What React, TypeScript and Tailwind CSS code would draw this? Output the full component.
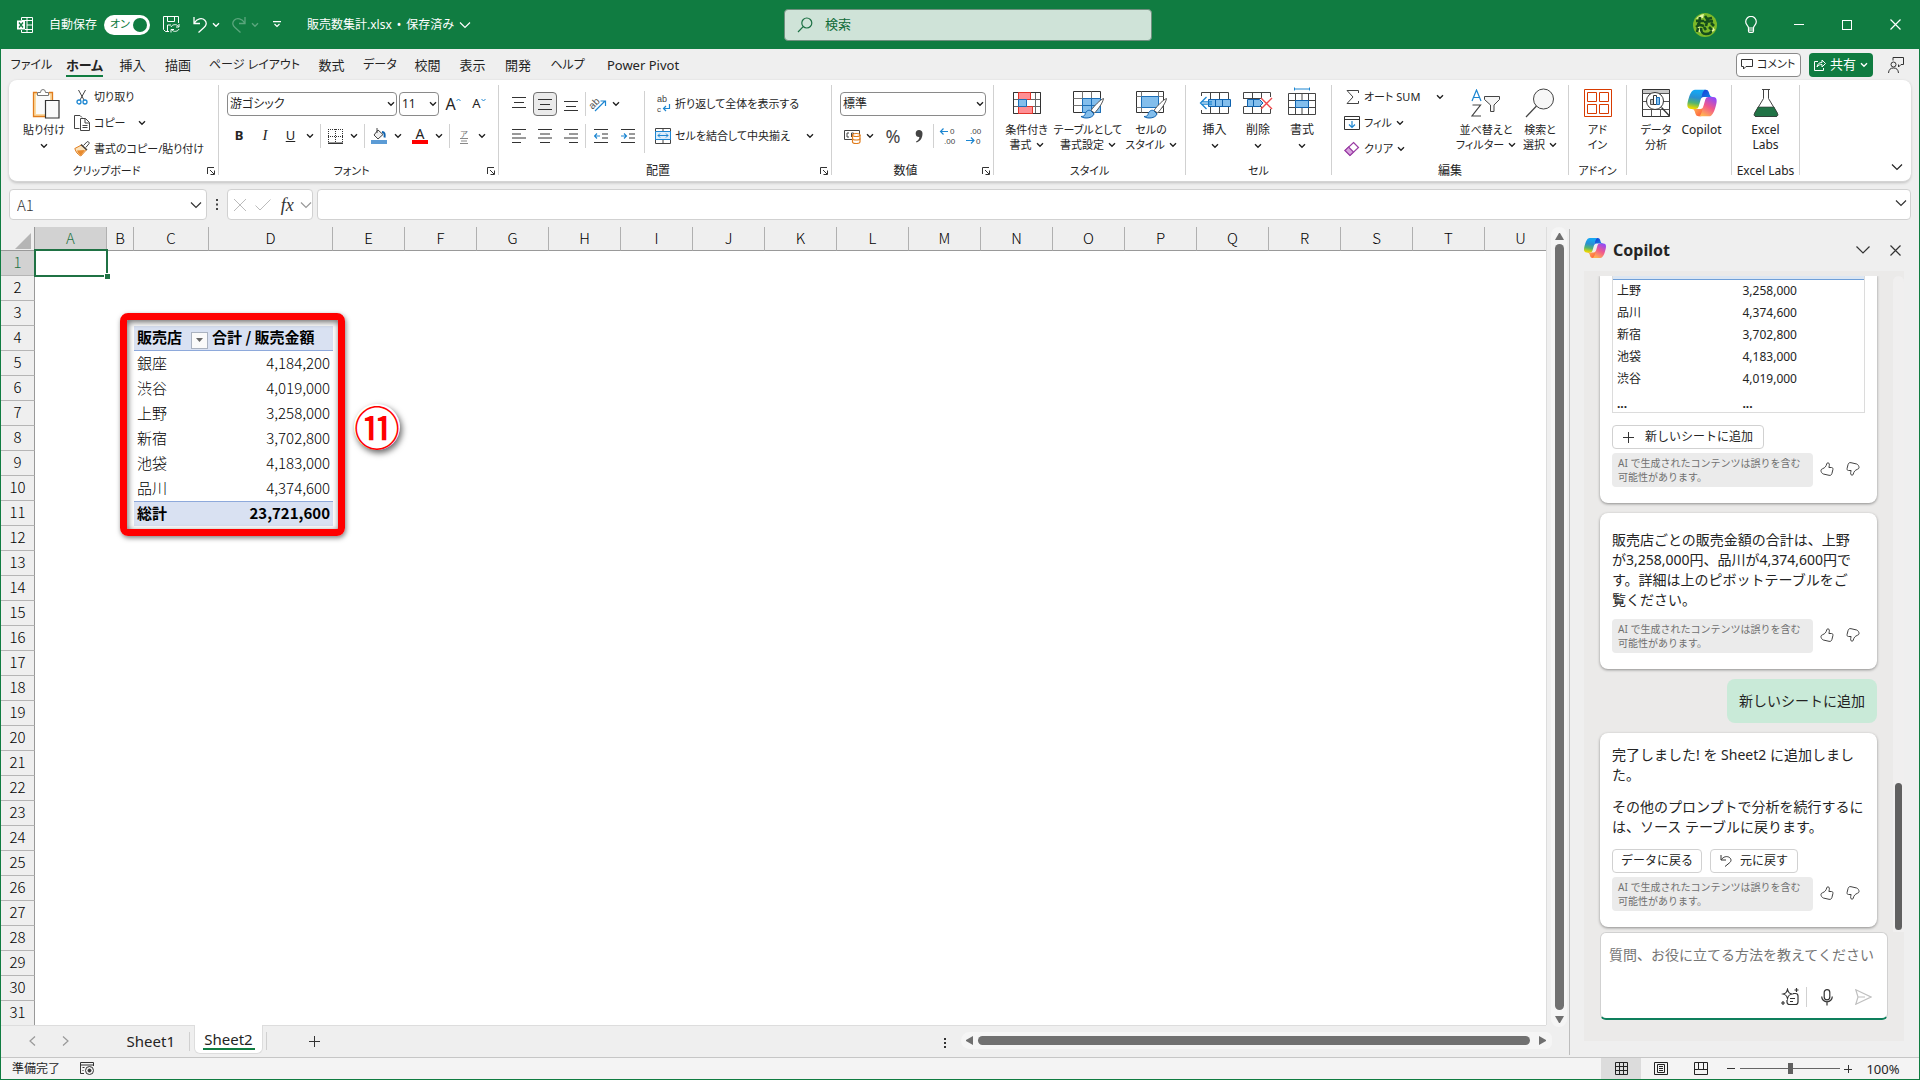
import React from "react";

type Kids = { children?: React.ReactNode };

/* ---------- small shared pieces ---------- */

function Chev({ className = "" }: { className?: string }) {
  return (
    <svg width="8" height="6" viewBox="0 0 8 6" fill="none" stroke="currentColor" strokeWidth="1.4" className={"shrink-0 " + className}>
      <path d="M1 1.2l3 3 3-3" />
    </svg>
  );
}

function BigChev({ className = "" }: { className?: string }) {
  return (
    <svg width="12" height="8" viewBox="0 0 12 8" fill="none" stroke="currentColor" strokeWidth="1.2" className={"shrink-0 " + className}>
      <path d="M1 1.5l5 5 5-5" />
    </svg>
  );
}

function Cell({ w, label, children }: Kids & { w: string; label?: string }) {
  return (
    <button type="button" aria-label={label} className={"flex h-6 shrink-0 items-center justify-center " + w}>
      {children}
    </button>
  );
}

function Bar({ w = "w-px" }: { w?: string }) {
  return (
    <span className={"flex h-6 shrink-0 justify-center " + w}>
      <span className="h-6 w-px bg-[#d1d1d1]" />
    </span>
  );
}

function Divider() {
  return <span className="mt-[5px] h-[90px] w-px shrink-0 bg-[#d1d1d1]" />;
}

function Launcher() {
  return (
    <button type="button" aria-label="詳細設定" className="w-[14px] shrink-0 pl-[3px]">
      <svg width="8" height="8" viewBox="0 0 8 8" fill="none" stroke="#333">
        <path d="M.5 7V.5H7M3 3l4 4M7.5 3.5v4h-4" />
      </svg>
    </button>
  );
}

function Group({ w, label, launcher, kana, children }: Kids & { w: string; label: string; launcher?: boolean; kana?: boolean }) {
  return (
    <section aria-label={label || "Copilot"} className={"flex shrink-0 flex-col pt-1 " + w}>
      <div className="flex h-[78px]">{children}</div>
      <div className="flex h-[18px] items-center">
        <span className={"flex-1 whitespace-nowrap text-center " + (kana ? "text-[11px]" : "text-xs")}>{label}</span>
        {launcher && <Launcher />}
      </div>
    </section>
  );
}

function Big({ w, icon, lines, chev, kana }: { w: string; icon: React.ReactNode; lines: string[]; chev?: "inline" | "below"; kana?: boolean }) {
  return (
    <button type="button" className={"flex shrink-0 flex-col items-center pt-1 " + w}>
      <span className="flex h-[30px] items-center justify-center">{icon}</span>
      <span className={"mt-1 flex flex-col items-center " + (kana ? "text-[11px]" : "text-xs")}>
        {lines.map((l, i) => (
          <span key={l} className="flex items-center gap-1 whitespace-nowrap leading-[15px]">
            {l}
            {chev === "inline" && i === lines.length - 1 && <Chev />}
          </span>
        ))}
      </span>
      {chev === "below" && <Chev className="mt-[6px]" />}
    </button>
  );
}

/* ---------- icons ---------- */

function CopilotLogo({ size, id }: { size: number; id: string }) {
  return (
    <svg width={size} height={size} viewBox="0 0 48 48" fill="none">
      <defs>
        <linearGradient id={id + "a"} x1="38" y1="18" x2="27" y2="5" gradientUnits="userSpaceOnUse">
          <stop stopColor="#0f8fe8" />
          <stop offset="1" stopColor="#1a44d8" />
        </linearGradient>
        <linearGradient id={id + "b"} x1="10" y1="32" x2="22" y2="44" gradientUnits="userSpaceOnUse">
          <stop stopColor="#ffb657" />
          <stop offset="1" stopColor="#ff5f3d" />
        </linearGradient>
        <linearGradient id={id + "c"} x1="14" y1="4" x2="9" y2="33" gradientUnits="userSpaceOnUse">
          <stop offset="0.1" stopColor="#16a5f0" />
          <stop offset="0.4" stopColor="#2a8fd0" />
          <stop offset="0.68" stopColor="#52b471" />
          <stop offset="0.95" stopColor="#e8d800" />
        </linearGradient>
        <linearGradient id={id + "d"} x1="42" y1="13" x2="24" y2="46" gradientUnits="userSpaceOnUse">
          <stop offset="0.06" stopColor="#8c48ff" />
          <stop offset="0.5" stopColor="#f2598a" />
          <stop offset="0.9" stopColor="#ffb152" />
        </linearGradient>
      </defs>
      <path fill={"url(#" + id + "a)"} d="M34.142 7.325A4.63 4.63 0 0 0 29.7 4h-1.35a4.63 4.63 0 0 0-4.554 3.794l-2.314 12.61.575-1.965a4.63 4.63 0 0 1 4.444-3.33h7.853l3.294 1.282 3.175-1.283h-.926a4.63 4.63 0 0 1-4.443-3.325l-1.31-4.457z" />
      <path fill={"url(#" + id + "b)"} d="M14.33 40.656A4.63 4.63 0 0 0 18.779 44h2.87a4.63 4.63 0 0 0 4.629-4.51l.312-12.163-.654 2.233a4.63 4.63 0 0 1-4.443 3.329h-7.919l-2.823-1.532-3.057 1.532h.912a4.63 4.63 0 0 1 4.447 3.344l1.279 4.423z" />
      <path fill={"url(#" + id + "c)"} d="M29.5 4H13.46c-4.583 0-7.332 6.057-9.165 12.113C2.123 23.29-.72 32.885 7.503 32.885h6.925a4.63 4.63 0 0 0 4.458-3.358 2079 2079 0 0 1 4.775-16.513c.808-2.743 1.48-5.1 2.515-6.567C26.756 5.624 27.725 4 29.5 4z" />
      <path fill={"url(#" + id + "d)"} d="M18.496 44h16.04c4.583 0 7.332-6.058 9.165-12.115 2.172-7.18 5.015-16.776-3.208-16.776h-6.926a4.63 4.63 0 0 0-4.458 3.358 2084 2084 0 0 1-4.774 16.517c-.808 2.744-1.48 5.102-2.515 6.568-.58.823-1.549 2.448-3.324 2.448z" />
    </svg>
  );
}

const PasteIcon = (
  <svg width="28" height="31" viewBox="0 0 28 31" fill="none">
    <path d="M1 4h20v25H1z" fill="#fbd9a0" />
    <path d="M4 7h14v19H4z" fill="#fafafa" />
    <path d="M5 4.500H1.500v24H13M17 4.500h3.500V12" stroke="#e07c1c" strokeWidth="1.300" />
    <path d="M5.500 7.500v-3h3a2.500 3 0 0 1 5 0h3v3z" fill="#fff" stroke="#777" />
    <path d="M13.500 12.500h13.500v17.500H13.500z" fill="#fafafa" stroke="#333" strokeWidth="1.200" />
  </svg>
);

const CutIcon = (
  <svg width="12" height="16" viewBox="0 0 12 16" fill="none">
    <path d="M2.500 1l5.500 10M9.500 1L4 11" stroke="#444" />
    <circle cx="3" cy="13" r="2" stroke="#1c86d1" strokeWidth="1.300" />
    <circle cx="9" cy="13" r="2" stroke="#1c86d1" strokeWidth="1.300" />
  </svg>
);

const CopyIcon = (
  <svg width="16" height="16" viewBox="0 0 16 16" fill="none" stroke="#444">
    <path d="M5.500 13.500h-5V.5h5.500l2 2" />
    <path d="M6.500 3.500h5l4 4v8h-9zM11 3.500V8h4.500M8.500 10.500h5M8.500 12.500h5" fill="#fff" />
  </svg>
);

const PainterIcon = (
  <svg width="16" height="16" viewBox="0 0 16 16" fill="none">
    <path d="M7.500 4L.8 7.500c1 3.500 3 6 6 7.500l5.500-6z" fill="#fbe3bd" stroke="#e07c1c" />
    <path d="M3 9.500L11 9l-4 5.500c-2-1-3.500-3-4-5z" fill="#e88a2d" />
    <path d="M9.500 4.500L13 .8c1-.8 2.800.8 2 1.900L11.800 6.500" fill="#fff" stroke="#444" />
    <path d="M7 3.500l6 5.500" stroke="#444" strokeWidth="1.500" />
  </svg>
);

function Lines({ d }: { d: string }) {
  return (
    <svg width="14" height="14" viewBox="0 0 14 14" fill="none" stroke="#333">
      <path d={d} />
    </svg>
  );
}

const CondIcon = (
  <svg width="28" height="22" viewBox="0 0 28 22" fill="none">
    <path d="M.5.5h27v21H.5zM.5 7.500h27M.5 14.500h27M5.500.5v21M22.500.5v21" fill="#fff" stroke="#666" />
    <path d="M.5.5h27v21H.5z" stroke="#333" />
    <path d="M5.500.5h12v7h-12zM5.500 14.500h14v7h-14z" fill="#ff8f94" stroke="#e1352b" />
    <path d="M5.500 7.500h8v7h-8z" fill="#83beec" stroke="#1c6fb8" />
  </svg>
);

function Brush() {
  return (
    <>
      <path d="M30.500 7.500c-3 1-9.500 7.500-12.500 12l3.500 2.500C25 18.500 30 11.500 30.500 7.500z" fill="#fff" stroke="#555" />
      <path d="M17.500 19.500c-3-1-5 1.500-5.500 4-.5 1.500-2 2-4 2 3 2.500 11.500 2 13-2.500z" fill="#83beec" stroke="#0f62ae" />
    </>
  );
}

const TableFmtIcon = (
  <svg width="31" height="28" viewBox="0 0 31 28" fill="none">
    <path d="M.5.5h27v21H.5z" fill="#fff" stroke="#333" />
    <path d="M.5 7.500h27M.5 14.500h27M9.500.5v21M18.500.5v21" stroke="#777" />
    <path d="M9.500 7.500h18v14h-18z" fill="#83beec" stroke="#1c6fb8" />
    <path d="M9.500 14.500h18M18.500 7.500v14" stroke="#1c6fb8" />
    <Brush />
  </svg>
);

const CellStyleIcon = (
  <svg width="31" height="28" viewBox="0 0 31 28" fill="none">
    <path d="M.5.5h27v21H.5z" fill="#fff" stroke="#333" />
    <path d="M.5 5.500h27M.5 16.500h27M5.500.5v21M22.500.5v21" stroke="#777" />
    <path d="M5.500 5.500h17v11h-17z" fill="#83beec" stroke="#1c6fb8" />
    <Brush />
  </svg>
);

const InsertIcon = (
  <svg width="32" height="22" viewBox="0 0 32 22" fill="none">
    <path d="M2.500.5h27v21h-27zM11.500.5v21M20.500.5v21" fill="#fff" stroke="#444" />
    <path d="M9.500 7.500h22v7h-22zM16.500 7.500v7M23.500 7.500v7" fill="#83beec" stroke="#0f62ae" />
    <path d="M0 4h9v14H0z" fill="#fff" />
    <path d="M7.500 5L1.500 11l6 6M2 9.800h11M2 12.200h11" stroke="#1c86d1" strokeWidth="1.300" />
  </svg>
);

const DeleteIcon = (
  <svg width="30" height="22" viewBox="0 0 30 22" fill="none">
    <path d="M.5 7V.5h27V5M.5 15v6.500h27V17M9.500.5v6M18.500.5v6M9.500 15v6M18.500 15v6M.5 6.500h18M.5 14.500h18" stroke="#444" />
    <path d="M4.500 7.500h12l3.500 3.500-3.500 3.500h-12zM10.500 7.500v7" fill="#83beec" stroke="#0f62ae" />
    <path d="M18 6l11 11M29 6L18 17" stroke="#f0484c" strokeWidth="1.400" />
  </svg>
);

const FormatIcon = (
  <svg width="28" height="28" viewBox="0 0 28 28" fill="none">
    <path d="M6.500.5v3M21.500.5v3M6.500 2h15" stroke="#1c86d1" />
    <path d="M.5 6.500h27v21H.5zM.5 13.500h27M.5 20.500h27M7.500 6.500v21M20.500 6.500v21M14 6.500v21" fill="#fff" stroke="#444" />
    <path d="M7.500 13.500h13v7h-13z" fill="#83beec" stroke="#0f62ae" />
  </svg>
);

const SortIcon = (
  <svg width="30" height="28" viewBox="0 0 30 28" fill="none">
    <path d="M1 12L5.500 1 10 12M2.500 8.500h6" stroke="#1c86d1" strokeWidth="1.200" />
    <path d="M1.500 16h8l-8.500 11h9" stroke="#444" strokeWidth="1.200" />
    <path d="M13.500 7.500h15v3l-5.500 5.500v6.500h-3.500V16l-6-5.500z" fill="#f5f5f5" stroke="#444" />
  </svg>
);

const FindIcon = (
  <svg width="30" height="30" viewBox="0 0 30 30" fill="none" stroke="#444">
    <circle cx="18.500" cy="11" r="10" fill="#f7f7f7" />
    <path d="M11.500 18L1 29" strokeWidth="1.200" />
  </svg>
);

const AddinIcon = (
  <svg width="28" height="28" viewBox="0 0 28 28" fill="none" stroke="#d83b01">
    <path d="M.5.5h27v27H.5zM3.500 3.500h9v9h-9zM15.500 3.500h9v9h-9zM3.500 15.500h9v9h-9zM15.500 15.500h9v9h-9z" />
  </svg>
);

const DataIcon = (
  <svg width="28" height="28" viewBox="0 0 28 28" fill="none">
    <path d="M.5.5h27v27H.5z" fill="#fff" stroke="#333" />
    <path d="M1 1h26v3H1z" fill="#c8c8c8" />
    <path d="M.5 4.500h27M.5 12.500h27M.5 20.500h27M9.500 20.500v7M18.500 20.500v7" stroke="#555" />
    <circle cx="13" cy="12" r="8.500" fill="#fff" stroke="#333" />
    <path d="M19.500 18.500l8 8.500" stroke="#333" strokeWidth="1.300" />
    <path d="M8.500 10.500h3v5h-3z" fill="#c8c8c8" stroke="#555" />
    <path d="M11.500 6.500h3v9h-3z" fill="#fff" stroke="#333" />
    <path d="M14.500 8.500h3v7h-3z" fill="#83beec" stroke="#1c6fb8" />
  </svg>
);

const FlaskIcon = (
  <svg width="26" height="28" viewBox="0 0 26 28" fill="none">
    <path d="M9 .5h8M10.500.5v9L1.500 24.500c-.6 1.500 0 3 1.500 3h20c1.500 0 2.100-1.500 1.500-3L15.500 9.500v-9" stroke="#444" />
    <path d="M5 18h16l3.500 6.500c.6 1.500 0 3-1.500 3H3c-1.500 0-2.100-1.500-1.500-3z" fill="#217346" stroke="#333" strokeWidth=".6" />
  </svg>
);

function Thumb({ down }: { down?: boolean }) {
  return (
    <button type="button" aria-label={down ? "よくない" : "よい"} className="shrink-0">
      <svg width="14" height="14" viewBox="0 0 14 14" fill="none" stroke="#424242" className={down ? "rotate-180" : ""}>
        <path d="M8 .8c1.500.2 1.700 1.700.9 4.700h2.600c1.200 0 1.700 1 1.400 2.100l-1 4c-.4 1.500-1.500 2-2.900 1.700L3.300 12C2 11.600.9 9.800 1 8.300c.1-.8.7-1.300 1.600-1.600C5 5.800 6 4.500 6.800 1.800 7 1.100 7.300.7 8 .8z" />
      </svg>
    </button>
  );
}

/* ---------- title bar ---------- */

function TitleBar() {
  return (
    <header className="flex h-[49px] shrink-0 items-center bg-[#107c41] text-xs text-white">
      <div className="flex flex-1 items-center pl-4">
        <svg width="16" height="16" viewBox="0 0 16 16" fill="none" stroke="#fff">
          <path d="M4.500 3V.5h11v15h-11V13M10 .5v15M4.500 3.500h11M10 8h5.500M8 12.500h7.500" />
          <path d="M0 3.500h8v9H0z" fill="#fff" stroke="none" />
          <path d="M2 5.500l4 5M6 5.500l-4 5" stroke="#107c41" strokeWidth="1.300" />
        </svg>
        <label htmlFor="autosave" className="ml-4 whitespace-nowrap">自動保存</label>
        <span className="relative ml-[7px] flex h-5 w-[46px] items-center rounded-full bg-white pl-[6px] text-[11px] text-[#107c41] [font-feature-settings:'palt']">
          オン
          <input id="autosave" type="checkbox" role="switch" defaultChecked className="absolute right-[3px] size-[14px] appearance-none rounded-full bg-[#107c41]" />
        </span>
        <button type="button" aria-label="保存" className="ml-[13px]">
          <svg width="17" height="17" viewBox="0 0 17 17" fill="none" stroke="#fff">
            <path d="M6 15.500H2.500l-2-2V.5h15V7M4.500.5v5h7v-5M4.500 15v-6H8" />
            <path d="M8 11c1-2.500 5.500-3.500 7.500-.5M16 8v3h-3M16 13c-1 2.500-5.500 3.500-7.500.5M8 16.500v-3h3" />
          </svg>
        </button>
        <button type="button" aria-label="元に戻す" className="ml-[13px] flex items-center gap-[5px]">
          <svg width="14" height="16" viewBox="0 0 14 16" fill="none" stroke="#fff" strokeWidth="1.300">
            <path d="M1 0v6.500h6M1.300 6C4 1.500 9 .5 11.800 3.300c2.400 2.500 1.400 5.200-.8 7.200L5.500 15.500" />
          </svg>
          <Chev />
        </button>
        <button type="button" aria-label="やり直し" className="ml-3 flex items-center gap-[5px] text-[#5ba67d]">
          <svg width="14" height="16" viewBox="0 0 14 16" fill="none" stroke="currentColor" strokeWidth="1.300">
            <path d="M13 0v6.500H7M12.700 6C10 1.500 5 .5 2.200 3.300-.2 5.800.8 8.500 3 10.500l5.500 5" />
          </svg>
          <Chev />
        </button>
        <button type="button" aria-label="ツール バーのカスタマイズ" className="ml-[14px]">
          <svg width="8" height="7" viewBox="0 0 8 7" fill="none" stroke="#fff" strokeWidth="1.200">
            <path d="M0 .6h8M1.500 3L4 5.500 6.500 3" />
          </svg>
        </button>
        <button type="button" className="ml-[26px] flex items-center gap-[5px] whitespace-nowrap">
          <span>販売数集計.xlsx</span>
          <span>•</span>
          <span>保存済み</span>
          <BigChev />
        </button>
      </div>
      <label className="flex h-8 w-[368px] items-center rounded border border-[#6f8f7e] bg-[#cfe3d8] pl-3 text-[#0f6b38]">
        <svg width="16" height="16" viewBox="0 0 16 16" fill="none" stroke="#1d7044" strokeWidth="1.200" className="shrink-0">
          <circle cx="9.800" cy="6" r="5" />
          <path d="M6.200 9.600L1 15" />
        </svg>
        <input aria-label="検索" placeholder="検索" className="ml-3 min-w-0 flex-1 bg-transparent text-[13px] outline-none placeholder:text-[#0f6b38]" />
      </label>
      <div className="flex flex-1 items-center justify-end">
        <svg width="24" height="24" viewBox="0 0 24 24" fill="none">
          <circle cx="12" cy="12" r="12" fill="#7cb928" />
          <path d="M3 6a12 12 0 0 1 8-5l-1 4zM3 18l3-5 3 7zM20 14l2 3-4 3z" fill="#e3f5a0" />
          <path d="M3 8h8M7 4l-1 8-3 2M12 3l2 3 5-1M11 9l9-1M15 5l-2 8M18 10l3 3M5 15l-1 4M8 15c0 4 1 6 5 6s5-1 5-3M11 14l2 3M16 14l3 3M4 11l7 2" stroke="#154d1c" strokeWidth="2.600" />
        </svg>
        <button type="button" aria-label="ヒント" className="flex w-[68px] justify-center">
          <svg width="12" height="17" viewBox="0 0 12 17" fill="none" stroke="#fff" strokeWidth="1.200">
            <path d="M3.500 12c0-2.500-2.800-3-2.800-6.300a5.300 5.300 0 0 1 10.600 0C11.300 9 8.500 9.500 8.500 12zM3.500 12v3c0 .8.500 1.300 1.200 1.300h2.600c.7 0 1.200-.5 1.200-1.300v-3M3.500 14h5" />
          </svg>
        </button>
        <button type="button" aria-label="最小化" className="flex w-7 justify-center"><span className="h-px w-[10px] bg-white" /></button>
        <button type="button" aria-label="最大化" className="flex w-[68px] justify-center"><span className="size-[10px] border border-white" /></button>
        <button type="button" aria-label="閉じる" className="mr-[10px] flex w-7 justify-center">
          <svg width="11" height="11" viewBox="0 0 11 11" stroke="#fff" strokeWidth="1.200"><path d="M.5.5l10 10M10.500.5l-10 10" /></svg>
        </button>
      </div>
    </header>
  );
}

/* ---------- tabs ---------- */

const tabs: [string, string][] = [
  ["ファイル", "w-[55px] text-xs"], ["ホーム", "w-[51px] text-[13px]"], ["挿入", "w-[45px] text-[13px]"], ["描画", "w-[46px] text-[13px]"],
  ["ページ レイアウト", "w-[107px] text-xs"], ["数式", "w-[47px] text-[13px]"], ["データ", "w-[50px] text-xs"], ["校閲", "w-[45px] text-[13px]"],
  ["表示", "w-[45px] text-[13px]"], ["開発", "w-[46px] text-[13px]"], ["ヘルプ", "w-[53px] text-xs"], ["Power Pivot", "w-[98px] text-[13px]"],
];

function TabRow() {
  return (
    <nav className="flex h-[31px] shrink-0 items-center pl-[3px] [font-feature-settings:'palt']">
      {tabs.map(([t, w]) => (
        <button key={t} type="button" className={"flex h-[31px] shrink-0 justify-center whitespace-nowrap pt-[6px] leading-5 " + w}>
          <span className={"leading-5 " + (t === "ホーム" ? "h-[22px] border-b-2 border-[#107c41] font-bold" : "")}>{t}</span>
        </button>
      ))}
      <span className="flex-1" />
      <button type="button" className="mr-2 flex h-6 w-[65px] items-center gap-1 rounded border border-[#8a8a8a] bg-white pl-[4px] text-[11px]">
        <svg width="12" height="11" viewBox="0 0 12 11" fill="none" stroke="#333" className="shrink-0">
          <path d="M.5.5h11v7H5L2.500 10V7.500h-2z" />
        </svg>
        <span className="whitespace-nowrap">コメント</span>
      </button>
      <button type="button" className="flex h-6 w-16 items-center gap-1 rounded bg-[#107c41] pl-[5px] text-[13px] text-white">
        <svg width="12" height="12" viewBox="0 0 12 12" fill="none" stroke="#fff" className="shrink-0">
          <path d="M4 2.500H.5v9h9V9M3 8c.5-3 2-4.500 5-4.500V1l3.500 3.500L8 8V5.500C6 5.500 4.500 6 3 8z" />
        </svg>
        <span className="whitespace-nowrap">共有</span>
        <Chev />
      </button>
      <button type="button" aria-label="共同作業" className="ml-[15px] mr-[15px]">
        <svg width="16" height="16" viewBox="0 0 16 16" fill="none" stroke="#333">
          <circle cx="5.500" cy="7.500" r="2.500" />
          <path d="M.5 16c.3-3.500 2-5 5-5s4.700 1.500 5 5M5 3.500v-3h10.500v7H13L10.500 10V7.500" />
        </svg>
      </button>
    </nav>
  );
}

/* ---------- ribbon ---------- */

function Combo({ id, w, value, label }: { id: string; w: string; value: string; label: string }) {
  return (
    <span className={"relative flex h-6 shrink-0 items-center " + w}>
      <select id={id} aria-label={label} className="h-6 w-full appearance-none rounded border border-[#8a8a8a] bg-white pl-[2px] text-xs leading-5">
        <option>{value}</option>
      </select>
      <Chev className="pointer-events-none absolute right-[2px]" />
    </span>
  );
}

function SmallRow({ icon, text, chev = "" }: { icon: React.ReactNode; text: string; chev?: string }) {
  return (
    <button type="button" className="flex h-[26px] items-center whitespace-nowrap text-[11px]">
      <span className="mr-1 flex w-4 justify-center">{icon}</span>
      {text}
      {chev && <Chev className={chev} />}
    </button>
  );
}

function Ribbon() {
  return (
    <div className="mx-2 flex h-[102px] shrink-0 overflow-hidden rounded-lg border-b border-[#d4d4d4] bg-white text-xs shadow-[0_1px_3px_rgba(0,0,0,0.2)] [font-feature-settings:'palt']">
      <Group w="w-[209px]" label="クリップボード" launcher kana>
        <div className="pl-2">
          <Big w="w-[54px]" icon={<span className="pl-1">{PasteIcon}</span>} lines={["貼り付け"]} chev="below" kana />
        </div>
        <div className="ml-[3px] flex flex-col">
          <SmallRow icon={CutIcon} text="切り取り" />
          <SmallRow icon={CopyIcon} text="コピー" chev="ml-3" />
          <SmallRow icon={PainterIcon} text="書式のコピー/貼り付け" />
        </div>
      </Group>
      <Divider />

      <Group w="w-[279px]" label="フォント" launcher kana>
        <div className="flex flex-col gap-2 pl-2 pt-2">
          <div className="flex items-center">
            <Combo id="font" w="w-[170px]" value="游ゴシック" label="フォント" />
            <span className="w-[2px]" />
            <Combo id="size" w="w-[40px]" value="11" label="フォント サイズ" />
            <Cell w="w-7" label="拡大">
              <span className="text-base">A</span>
              <svg width="5" height="12" viewBox="0 0 5 12" fill="none" stroke="#1c86d1"><path d="M.5 3l2-2 2 2" /></svg>
            </Cell>
            <Cell w="w-6" label="縮小">
              <span className="text-[13px]">A</span>
              <svg width="5" height="12" viewBox="0 0 5 12" fill="none" stroke="#1c86d1"><path d="M.5 1l2 2 2-2" /></svg>
            </Cell>
          </div>
          <div className="flex items-center">
            <Cell w="w-6"><b className="text-[13px]">B</b></Cell>
            <Cell w="w-7"><i className="font-['Liberation_Serif'] text-[15px]">I</i></Cell>
            <Cell w="w-[23px]"><span className="text-[13px] underline">U</span></Cell>
            <Cell w="w-[15px]" label="下線"><Chev /></Cell>
            <Bar w="w-[6px]" />
            <Cell w="w-6" label="罫線">
              <svg width="15" height="15" viewBox="0 0 15 15" fill="none" stroke="#333">
                <path d="M0 .5h15M.5 0v14M14.500 0v14M7.500 0v14M0 7.500h15" strokeDasharray="1 1" />
                <path d="M0 14.300h15" strokeWidth="1.400" />
              </svg>
            </Cell>
            <Cell w="w-[13px]" label="罫線メニュー"><Chev /></Cell>
            <Bar w="w-[8px]" />
            <Cell w="w-[22px]" label="塗りつぶし">
              <svg width="16" height="16" viewBox="0 0 16 16" fill="none">
                <path d="M7 2l5 4.500-5 4.500-4-4zM6 0v5" fill="#eee" stroke="#444" />
                <path d="M11 4c2.500 0 3 2 2.500 5.500" stroke="#0f62ae" strokeWidth="2" />
                <path d="M0 12h16v4H0z" fill="#5b9bd5" />
              </svg>
            </Cell>
            <Cell w="w-4" label="塗りつぶしの色"><Chev /></Cell>
            <Cell w="w-7" label="文字の色">
              <span className="flex w-4 flex-col items-center border-b-4 border-[#ff0000] text-[14px] leading-3">A</span>
            </Cell>
            <Cell w="w-[10px]" label="文字の色メニュー"><Chev /></Cell>
            <Bar w="w-[10px]" />
            <Cell w="w-5" label="ふりがな">
              <span className="flex flex-col items-center text-[8px] leading-[9px] text-[#777]">
                <span>ア</span>
                <svg width="8" height="6" viewBox="0 0 8 6" stroke="#888"><path d="M0 .5h8M1 3h6M0 5.500h8" /></svg>
              </span>
            </Cell>
            <Cell w="w-4" label="ふりがなメニュー"><Chev /></Cell>
          </div>
        </div>
      </Group>
      <Divider />

      <Group w="w-[332px]" label="配置" launcher>
        <div className="flex w-[145px] shrink-0 flex-col gap-2 pl-[7px] pt-2">
          <div className="flex items-center">
            <Cell w="w-[26px]" label="上揃え"><Lines d="M0 .5h14M2 5.500h10M0 10.500h14" /></Cell>
            <button type="button" aria-label="上下中央揃え" className="mx-px flex size-6 shrink-0 items-center justify-center rounded border border-[#707070] bg-[#ebebeb]">
              <Lines d="M0 2.500h14M2 7.500h10M0 12.500h14" />
            </button>
            <Cell w="w-[26px]" label="下揃え"><Lines d="M0 4.500h14M2 9.500h10M0 13.500h14" /></Cell>
            <Bar w="w-[3px]" />
            <Cell w="w-6" label="方向">
              <svg width="18" height="16" viewBox="0 0 18 16" fill="none" className="overflow-visible">
                <text x="-1" y="11" fontSize="10" fontFamily="Liberation Sans" fill="#555" transform="rotate(-45 4 8)">ab</text>
                <path d="M5 15L15 5M10.500 5h5v5" stroke="#1c86d1" strokeWidth="1.200" />
              </svg>
            </Cell>
            <Cell w="w-[10px]" label="方向メニュー"><Chev /></Cell>
          </div>
          <div className="flex items-center">
            <Cell w="w-[26px]" label="左揃え"><Lines d="M0 .5h14M0 5h9M0 9h14M0 13.500h9" /></Cell>
            <Cell w="w-[26px]" label="中央揃え"><Lines d="M0 .5h14M2 5h10M0 9h14M2 13.500h10" /></Cell>
            <Cell w="w-[26px]" label="右揃え"><Lines d="M0 .5h14M5 5h9M0 9h14M5 13.500h9" /></Cell>
            <Bar w="w-[3px]" />
            <Cell w="w-7" label="インデントを減らす">
              <svg width="14" height="14" viewBox="0 0 14 14" fill="none"><path d="M0 .5h14M8 5h6M8 9h6M0 13.500h14" stroke="#333" /><path d="M6 7H.7M3 4.500L.5 7 3 9.500" stroke="#1c86d1" strokeWidth="1.200" /></svg>
            </Cell>
            <Cell w="w-[25px]" label="インデントを増やす">
              <svg width="14" height="14" viewBox="0 0 14 14" fill="none"><path d="M0 .5h14M8 5h6M8 9h6M0 13.500h14" stroke="#333" /><path d="M0 7h5.300M3 4.500L5.500 7 3 9.500" stroke="#1c86d1" strokeWidth="1.200" /></svg>
            </Cell>
          </div>
        </div>
        <span className="mt-[7px] h-[62px] w-px shrink-0 bg-[#d1d1d1]" />
        <div className="flex flex-col gap-2 pl-[10px] pt-2 text-[11px]">
          <button type="button" className="flex h-6 items-center gap-1 whitespace-nowrap">
            <svg width="16" height="18" viewBox="0 0 16 18" fill="none" className="overflow-visible">
              <text x="2" y="7" fontSize="9" fontFamily="Liberation Sans" fill="#444">ab</text>
              <text x="2" y="17" fontSize="8" fontFamily="Liberation Sans" fill="#444">c</text>
              <path d="M14.500 9v4.500H8.500M11 11l-2.500 2.500L11 16" stroke="#1c86d1" strokeWidth="1.200" />
            </svg>
            折り返して全体を表示する
          </button>
          <button type="button" className="flex h-6 items-center gap-1 whitespace-nowrap">
            <svg width="16" height="16" viewBox="0 0 16 16" fill="none">
              <path d="M.5.5h15v15H.5zM8 .5v3M8 12v3" stroke="#444" />
              <path d="M.5 3.500h15v8H.5z" fill="#dcedfa" stroke="#1c86d1" />
              <path d="M3 7.500h10M5 5.500l-2 2 2 2M11 5.500l2 2-2 2" stroke="#1c86d1" />
            </svg>
            セルを結合して中央揃え
            <Chev className="ml-3" />
          </button>
        </div>
      </Group>
      <Divider />

      <Group w="w-[161px]" label="数値" launcher>
        <div className="flex flex-col gap-2 pl-2 pt-2">
          <Combo id="numfmt" w="w-[146px]" value="標準" label="表示形式" />
          <div className="flex items-center">
            <Cell w="w-6" label="通貨">
              <svg width="17" height="16" viewBox="0 0 17 16" fill="none">
                <path d="M.5 2.500h15v9H.5z" stroke="#444" />
                <path d="M5 5H3v4h2M7.500 9V5h2v4M7.500 7h2" stroke="#444" />
                <path d="M8.500 7c0-2 7.500-2 7.500 0v7c0 2-7.500 2-7.500 0z" fill="#fff" stroke="#e07c1c" strokeWidth="1.200" />
                <path d="M8.500 7c0 2 7.500 2 7.500 0M8.500 10.500c0 2 7.500 2 7.500 0" stroke="#e07c1c" strokeWidth="1.200" />
              </svg>
            </Cell>
            <Cell w="w-3" label="通貨メニュー"><Chev /></Cell>
            <Cell w="w-[34px]"><span className="text-[18px] text-[#444]">%</span></Cell>
            <Cell w="w-[18px]" label="桁区切り">
              <svg width="8" height="13" viewBox="0 0 8 13" fill="#444"><path d="M4 0a3.500 3.500 0 0 1 3.500 3.700C7.500 8 5 11.500 1.500 12.500L1 11.500c2-1 3.200-2.500 3.400-4.500A3.500 3.500 0 1 1 4 0z" /></svg>
            </Cell>
            <Bar w="w-[10px]" />
            <Cell w="w-5" label="小数点以下の表示桁数を増やす">
              <svg width="16" height="18" viewBox="0 0 16 18" fill="none" className="overflow-visible">
                <text x="10" y="7" fontSize="8" fontFamily="Liberation Sans" fill="#444">0</text>
                <text x="4" y="17" fontSize="8" fontFamily="Liberation Sans" fill="#444">.00</text>
                <path d="M8 4.500H.7M3.500 1.500l-3 3 3 3" stroke="#1c86d1" strokeWidth="1.200" />
              </svg>
            </Cell>
            <Cell w="w-8" label="小数点以下の表示桁数を減らす">
              <svg width="16" height="18" viewBox="0 0 16 18" fill="none" className="overflow-visible">
                <text x="4" y="7" fontSize="8" fontFamily="Liberation Sans" fill="#444">.00</text>
                <text x="10" y="17" fontSize="8" fontFamily="Liberation Sans" fill="#444">0</text>
                <path d="M0 13.500h7.500M5 10.500l3 3-3 3" stroke="#1c86d1" strokeWidth="1.200" />
              </svg>
            </Cell>
          </div>
        </div>
      </Group>
      <Divider />

      <Group w="w-[191px]" label="スタイル" kana>
        <span className="w-[9px]" />
        <Big w="w-[47px]" icon={CondIcon} lines={["条件付き", "書式"]} chev="inline" kana />
        <Big w="w-[76px]" icon={<span className="pt-1">{TableFmtIcon}</span>} lines={["テーブルとして", "書式設定"]} chev="inline" kana />
        <Big w="w-[50px]" icon={<span className="pt-1">{CellStyleIcon}</span>} lines={["セルの", "スタイル"]} chev="inline" kana />
      </Group>
      <Divider />

      <Group w="w-[145px]" label="セル" kana>
        <span className="w-[7px]" />
        <Big w="w-[43px]" icon={InsertIcon} lines={["挿入"]} chev="below" />
        <Big w="w-[44px]" icon={DeleteIcon} lines={["削除"]} chev="below" />
        <Big w="w-[44px]" icon={<span className="pb-1">{FormatIcon}</span>} lines={["書式"]} chev="below" />
      </Group>
      <Divider />

      <Group w="w-[236px]" label="編集">
        <div className="flex w-[125px] flex-col pl-3">
          <SmallRow
            icon={<svg width="13" height="14" viewBox="0 0 13 14" fill="none" stroke="#444"><path d="M12.500 3V.5H1L7 7l-6 6.500h11.500V11" /></svg>}
            text="オート SUM"
            chev="ml-4"
          />
          <SmallRow
            icon={<svg width="16" height="14" viewBox="0 0 16 14" fill="none"><path d="M.5.5h15v13H.5zM.5 3.500h15" stroke="#333" /><path d="M8 5v6.500M5 8.500l3 3 3-3" stroke="#1c86d1" strokeWidth="1.200" /></svg>}
            text="フィル"
            chev="ml-1"
          />
          <SmallRow
            icon={<svg width="16" height="16" viewBox="0 0 16 16" fill="none" stroke="#9b3fa5" strokeWidth="1.200"><path d="M9.500 1.500l5 5-8.500 8-5-5z" /><path d="M4.500 6L9.500 11 6 14.500l-5-5z" fill="#d9a3df" /></svg>}
            text="クリア"
            chev="ml-1"
          />
        </div>
        <Big w="w-[58px]" icon={SortIcon} lines={["並べ替えと", "フィルター"]} chev="inline" kana />
        <Big w="w-[50px]" icon={FindIcon} lines={["検索と", "選択"]} chev="inline" kana />
      </Group>
      <Divider />

      <Group w="w-[57px]" label="アドイン" kana>
        <Big w="w-full" icon={AddinIcon} lines={["アド", "イン"]} kana />
      </Group>
      <Divider />

      <Group w="w-[104px]" label="">
        <span className="w-[5px]" />
        <Big w="w-12" icon={DataIcon} lines={["データ", "分析"]} kana />
        <Big w="w-[43px]" icon={<CopilotLogo size={32} id="r" />} lines={["Copilot"]} />
      </Group>
      <Divider />

      <Group w="w-[67px]" label="Excel Labs">
        <Big w="w-full" icon={FlaskIcon} lines={["Excel", "Labs"]} />
      </Group>
      <Divider />
      <span className="flex-1" />
      <button type="button" aria-label="リボンを折りたたむ" className="mb-[10px] mr-2 self-end">
        <BigChev />
      </button>
    </div>
  );
}

/* ---------- formula bar ---------- */

function FormulaBar() {
  return (
    <div className="mx-2 mb-[7px] mt-[7px] flex h-[31px] shrink-0 text-[#333]">
      <label className="flex w-[198px] items-center rounded border border-[#d1d1d1] bg-white pl-[7px] pr-1 pt-px">
        <input aria-label="名前ボックス" defaultValue="A1" className="min-w-0 flex-1 bg-transparent pt-px font-['Noto_Sans_CJK_JP'] text-[15px] font-light outline-none" />
        <BigChev />
      </label>
      <span className="flex w-5 items-center justify-center">
        <svg width="2" height="11" viewBox="0 0 2 11" fill="#444"><path d="M0 0h2v2H0zM0 4.500h2v2H0zM0 9h2v2H0z" /></svg>
      </span>
      <div className="flex w-[86px] items-center rounded border border-[#d1d1d1] bg-white">
        <button type="button" aria-label="キャンセル" className="flex w-6 justify-center">
          <svg width="12" height="12" viewBox="0 0 12 12" stroke="#bbb"><path d="M0 0l12 12M12 0L0 12" /></svg>
        </button>
        <button type="button" aria-label="入力" className="flex w-6 justify-center">
          <svg width="16" height="12" viewBox="0 0 16 12" fill="none" stroke="#bbb"><path d="M.5 6.500l4.500 4.500L15.500.5" /></svg>
        </button>
        <button type="button" className="flex w-[26px] justify-center font-['Liberation_Serif'] text-[18px] italic leading-5">fx</button>
        <BigChev className="text-[#999]" />
      </div>
      <label className="ml-1 flex flex-1 rounded border border-[#d1d1d1] bg-white pr-[3px] pt-[9px]">
        <input aria-label="数式バー" className="h-4 min-w-0 flex-1 bg-transparent outline-none" />
        <BigChev />
      </label>
    </div>
  );
}

/* ---------- worksheet ---------- */

const cols: [string, string][] = [
  ["A", "w-[72px]"], ["B", "w-[27px]"], ["C", "w-[75px]"], ["D", "w-[124px]"],
  ..."EFGHIJKLMNOPQRSTU".split("").map((c): [string, string] => [c, "w-[72px]"]),
];

const pivot: Record<number, [string, string]> = {
  4: ["販売店", "合計 / 販売金額"],
  5: ["銀座", "4,184,200"],
  6: ["渋谷", "4,019,000"],
  7: ["上野", "3,258,000"],
  8: ["新宿", "3,702,800"],
  9: ["池袋", "4,183,000"],
  10: ["品川", "4,374,600"],
  11: ["総計", "23,721,600"],
};

function Sheet() {
  const rows = Array.from({ length: 31 }, (_, i) => i + 1);
  return (
    <div className="relative min-w-0 flex-1 overflow-hidden border-r border-[#ddd] bg-white">
      <table className="w-[1556px] table-fixed border-separate border-spacing-0 font-['Noto_Sans_CJK_JP'] text-[15px] font-light leading-5 text-black">
        <colgroup>
          <col className="w-[34px]" />
          {cols.map(([c, w]) => <col key={c} className={w} />)}
        </colgroup>
        <thead>
          <tr className="h-6">
            <th aria-label="すべて選択" className="border-b border-r border-[#999] bg-[#efefef] p-0">
              <svg width="16" height="16" viewBox="0 0 16 16" fill="#b5b5b5" className="ml-auto mr-[3px] mt-1"><path d="M16 0v16H0z" /></svg>
            </th>
            {cols.map(([c]) => (
              <th key={c} scope="col" className={"border-b border-r border-b-[#999] border-r-[#b0b0b0] p-0 pb-[2px] font-light " + (c === "A" ? "bg-[#d2d2d2] text-[#1f7244]" : "bg-[#efefef]")}>
                {c}
              </th>
            ))}
          </tr>
        </thead>
        <tbody>
          {rows.map((r) => {
            const p = pivot[r];
            const bold = r === 4 || r === 11;
            const edge = r === 4 ? " border-b border-[#8ea9db]" : r === 11 ? " border-t border-[#8ea9db]" : "";
            const look = bold ? " bg-[#d9e1f2] font-bold" + edge : "";
            return (
              <tr key={r} className="h-[25px]">
                <th scope="row" className={"border-b border-r border-b-[#b5b5b5] border-r-[#999] p-0 pb-[2px] font-light " + (r === 1 ? "bg-[#d2d2d2] text-[#1f7244]" : "bg-[#efefef]")}>
                  {r}
                </th>
                {cols.map(([c]) => {
                  if (r === 1 && c === "A")
                    return (
                      <td key={c} className="relative p-0">
                        <span className="absolute -bottom-px -left-px -right-px -top-[2px] border-2 border-[#1f7244]" />
                        <span className="absolute -bottom-[3px] -right-[3px] size-[6px] border-l border-t border-white bg-[#1f7244]" />
                      </td>
                    );
                  if (p && c === "C")
                    return (
                      <td key={c} className={"p-0 pb-[2px]" + look}>
                        <span className="flex h-5 items-center whitespace-nowrap pl-[3px]">
                          {p[0]}
                          {r === 4 && (
                            <button type="button" aria-label="フィルター" className="ml-auto mr-px mt-[6px] flex h-[17px] w-[17px] items-center justify-center border border-[#aab2c0] bg-[#fafafa]">
                              <svg width="7" height="4" viewBox="0 0 7 4" fill="#666"><path d="M0 0h7L3.500 4z" /></svg>
                            </button>
                          )}
                        </span>
                      </td>
                    );
                  if (p && c === "D")
                    return (
                      <td key={c} className={"whitespace-nowrap p-0 pb-[2px] " + (r === 4 ? "pl-[3px] text-left" : "pr-[3px] text-right") + look}>
                        {p[1]}
                      </td>
                    );
                  return <td key={c} className="p-0" />;
                })}
              </tr>
            );
          })}
        </tbody>
      </table>
      <div className="pointer-events-none absolute left-[119px] top-[86px] h-[223px] w-[225px] rounded-lg border-7 border-[#ff0000] shadow-[1px_2px_5px_rgba(0,0,0,0.5),inset_1px_2px_6px_rgba(0,0,0,0.6)]" />
      <div className="absolute left-[353px] top-[177px] flex size-[46px] items-center justify-center rounded-full bg-white font-['Noto_Sans_CJK_JP'] text-[46px] font-medium leading-[42px] text-[#ff0000] shadow-[2px_3px_6px_rgba(0,0,0,0.6)]">
        <span className="mb-1">⑪</span>
      </div>
    </div>
  );
}

function SheetScroll() {
  return (
    <div className="-mb-[2px] ml-1 mr-[2px] flex w-4 shrink-0 flex-col items-center rounded-full bg-[#f5f5f5] pb-1 pt-[6px]">
      <svg width="9" height="7" viewBox="0 0 9 7" fill="#6f6f6f"><path d="M0 7L4 0h1l4 7z" /></svg>
      <span className="mb-[6px] mt-1 w-[9px] flex-1 rounded-full bg-[#707070]" />
      <svg width="9" height="7" viewBox="0 0 9 7" fill="#6f6f6f"><path d="M0 0h9L5 7H4z" /></svg>
    </div>
  );
}

function SheetTabs() {
  return (
    <div className="flex h-8 shrink-0 items-start text-[15px] leading-5">
      <div className="flex h-8 min-w-0 flex-1 items-start border-t border-[#ddd]">
        <button type="button" aria-label="前のシート" className="ml-7 mt-[10px]">
          <svg width="7" height="10" viewBox="0 0 7 10" fill="none" stroke="#999" strokeWidth="1.200"><path d="M6 .5L1 5l5 4.500" /></svg>
        </button>
        <button type="button" aria-label="次のシート" className="ml-[26px] mt-[10px]">
          <svg width="7" height="10" viewBox="0 0 7 10" fill="none" stroke="#999" strokeWidth="1.200"><path d="M1 .5L6 5 1 9.500" /></svg>
        </button>
        <button type="button" className="ml-[43px] mt-[6px] w-[78px] border-r border-[#d0d0d0] pr-[14px] text-right leading-[19px]">
          Sheet1
        </button>
        <div className="-mt-px ml-1 flex h-[29px] w-[69px] justify-center rounded-b-md border-x border-b border-[#ddd] bg-white">
          <button type="button" className="mt-1 h-[21px] w-[52px] border-b-2 border-[#107c41] leading-[18px]">Sheet2</button>
        </div>
        <span className="ml-[3px] mt-[6px] h-[18px] w-px bg-[#d0d0d0]" />
        <button type="button" aria-label="新しいシート" className="ml-[42px] mt-[10px]">
          <svg width="11" height="11" viewBox="0 0 11 11" stroke="#333"><path d="M0 5.500h11M5.500 0v11" /></svg>
        </button>
        <span className="flex-1" />
        <svg width="2" height="10" viewBox="0 0 2 10" fill="#333" className="mt-3"><path d="M0 0h2v2H0zM0 4h2v2H0zM0 8h2v2H0z" /></svg>
        <div className="ml-[15px] flex h-[17px] w-[585px] items-center mt-[6px] rounded-l-full bg-[#f5f5f5] pl-[5px]">
          <svg width="7" height="9" viewBox="0 0 7 9" fill="#6f6f6f"><path d="M7 0v9L0 5V4z" /></svg>
          <span className="ml-[5px] mr-[9px] h-[9px] flex-1 rounded-full bg-[#707070]" />
          <svg width="7" height="9" viewBox="0 0 7 9" fill="#6f6f6f"><path d="M0 0v9l7-4V4z" /></svg>
        </div>
      </div>
      <span className="mr-[17px] mt-[7px] h-[17px] w-[6px] rounded-r-full bg-[#f5f5f5]" />
    </div>
  );
}

/* ---------- Copilot pane ---------- */

function Disclaimer({ className }: { className: string }) {
  return (
    <div className={"flex items-center " + className}>
      <p className="h-[34px] w-[201px] shrink-0 whitespace-nowrap rounded bg-[#ebebeb] px-[6px] py-[3px] text-[10px] leading-[14px] text-[#707070]">
        AI で生成されたコンテンツは誤りを含む
        <br />
        可能性があります。
      </p>
      <span className="ml-[7px] mt-px"><Thumb /></span>
      <span className="ml-3 mt-px"><Thumb down /></span>
    </div>
  );
}

function PaneButton({ w, children }: Kids & { w: string }) {
  return (
    <button type="button" className={"flex h-6 shrink-0 items-center justify-center whitespace-nowrap rounded border border-[#d1d1d1] bg-white text-xs " + w}>
      {children}
    </button>
  );
}

const preview: [string, string][] = [
  ["上野", "3,258,000"], ["品川", "4,374,600"], ["新宿", "3,702,800"], ["池袋", "4,183,000"], ["渋谷", "4,019,000"],
];

const card = "shrink-0 bg-white px-3 pb-4 shadow-[0_1px_3px_rgba(0,0,0,0.4)] ";

function CopilotPane() {
  return (
    <aside className="mb-[2px] mt-[2px] flex w-[350px] shrink-0 flex-col border-l border-[#bdbdbd] text-sm leading-5">
      <div className="flex h-[42px] shrink-0 items-center pl-[13px]">
        <span className="mb-[5px]"><CopilotLogo size={24} id="p" /></span>
        <h2 className="ml-[6px] text-base font-bold">Copilot</h2>
        <span className="flex-1" />
        <button type="button" aria-label="メニュー" className="mr-5">
          <svg width="14" height="8" viewBox="0 0 14 8" fill="none" stroke="#333" strokeWidth="1.200"><path d="M.5.5L7 7 13.500.5" /></svg>
        </button>
        <button type="button" aria-label="閉じる" className="mr-[18px]">
          <svg width="11" height="11" viewBox="0 0 11 11" stroke="#333" strokeWidth="1.200"><path d="M.5.5l10 10M10.500.5l-10 10" /></svg>
        </button>
      </div>
      <div className="mb-[14px] ml-[14px] mr-[15px] flex min-h-0 flex-1 flex-col bg-[#ebeae9] pt-[5px]">
        <div className="flex min-h-0 flex-1">
          <div className="flex min-w-0 flex-1 flex-col justify-end gap-[10px] overflow-hidden px-4 pb-[5px]">
            <article className={card + "rounded-b-lg"}>
              <table className="w-full table-fixed border-separate border-spacing-0 border-x border-b border-[#dcdcdc] text-xs">
                <thead>
                  <tr className="h-[5px]">
                    <th aria-label="販売店" className="h-[5px] border-b border-[#6f9fd8] bg-[#dce6f2] p-0" />
                    <th aria-label="販売金額" className="h-[5px] border-b border-[#6f9fd8] bg-[#dce6f2] p-0" />
                  </tr>
                </thead>
                <tbody>
                  {preview.map(([a, b]) => (
                    <tr key={a} className="h-[22px]">
                      <td className="py-0 pl-1">{a}</td>
                      <td className="py-0 pl-1">{b}</td>
                    </tr>
                  ))}
                  <tr className="h-[22px] align-bottom font-bold">
                    <td className="py-0 pl-1">...</td>
                    <td className="py-0 pl-1">...</td>
                  </tr>
                </tbody>
              </table>
              <div className="mt-3 flex">
                <PaneButton w="w-[152px] gap-[11px]">
                  <svg width="11" height="11" viewBox="0 0 11 11" stroke="#333"><path d="M0 5.500h11M5.500 0v11" /></svg>
                  新しいシートに追加
                </PaneButton>
              </div>
              <Disclaimer className="mt-1" />
            </article>
            <article className={card + "rounded-lg pt-[17px]"}>
              <p className="whitespace-nowrap">
                販売店ごとの販売金額の合計は、上野
                <br />
                が3,258,000円、品川が4,374,600円で
                <br />
                す。詳細は上のピボットテーブルをご
                <br />
                覧ください。
              </p>
              <Disclaimer className="mt-[9px]" />
            </article>
            <p className="flex h-11 shrink-0 items-center self-end rounded-lg bg-[#c9ead8] px-3">新しいシートに追加</p>
            <article className={card + "rounded-lg pt-3"}>
              <p className="whitespace-nowrap">
                完了しました! を Sheet2 に追加しまし
                <br />
                た。
              </p>
              <p className="mt-3 whitespace-nowrap">
                その他のプロンプトで分析を続行するに
                <br />
                は、ソース テーブルに戻ります。
              </p>
              <div className="mt-3 flex gap-2">
                <PaneButton w="w-[90px]">データに戻る</PaneButton>
                <PaneButton w="w-[88px] gap-2">
                  <svg width="12" height="12" viewBox="0 0 12 12" fill="none" stroke="#333"><path d="M1 0v5h5M1.300 4.700C3.500 1.500 7 .8 9.500 2.500c2.300 2 1.700 4-.2 5.500L5 11.500" /></svg>
                  元に戻す
                </PaneButton>
              </div>
              <Disclaimer className="mt-1" />
            </article>
          </div>
          <div className="flex w-[11px] shrink-0 flex-col justify-end rounded-t-md bg-[#f0efef] pl-[2px]">
            <span className="mb-[2px] h-[147px] w-[7px] rounded-full bg-[#606060]" />
          </div>
        </div>
        <div className="mb-[21px] ml-4 mr-4 flex h-[88px] shrink-0 flex-col rounded-md border border-b-2 border-[#d1d1d1] border-b-[#0e7f5c] bg-white">
          <textarea aria-label="メッセージ" placeholder="質問、お役に立てる方法を教えてください" className="mt-3 h-5 resize-none overflow-hidden whitespace-nowrap pl-2 outline-none placeholder:text-[#757575]" />
          <div className="mt-[22px] flex items-center justify-end pr-[15px]">
            <button type="button" aria-label="プロンプト" className="mr-[7px]">
              <svg width="18" height="18" viewBox="0 0 18 18" fill="none" stroke="#333" strokeWidth="1.200">
                <path d="M6.500 1.500c.8 3 1.500 3.700 4.500 4.500-3 .8-3.700 1.500-4.500 4.500C5.700 7.500 5 6.800 2 6c3-.8 3.700-1.500 4.500-4.500z" />
                <path d="M12 5.500h2.500c1.500 0 2.500 1 2.500 2.500v6c0 1.500-1 2.500-2.500 2.500h-6C7 16.500 6 15.500 6 14v-2M9 10.500h5M9 13.500h3M15.500 0v4M13.500 2h4M2 13v4M0 15h4" />
              </svg>
            </button>
            <span className="h-5 w-px bg-[#d1d1d1]" />
            <button type="button" aria-label="音声入力" className="ml-[14px]">
              <svg width="12" height="17" viewBox="0 0 12 17" fill="none" stroke="#333" strokeWidth="1.200">
                <path d="M3.200 3.500a2.800 2.800 0 0 1 5.600 0v4.500a2.800 2.800 0 0 1-5.600 0zM.7 7.500a5.300 5.300 0 0 0 10.600 0M6 13v3.500" />
              </svg>
            </button>
            <button type="button" aria-label="送信" className="ml-[22px]">
              <svg width="17" height="16" viewBox="0 0 17 16" fill="none" stroke="#c0c0c0" strokeWidth="1.200"><path d="M.8.8L16 8 .8 15.200 3 8zM3 8h7" /></svg>
            </button>
          </div>
        </div>
      </div>
    </aside>
  );
}

/* ---------- status bar ---------- */

function StatusBar() {
  return (
    <footer className="flex h-[22px] shrink-0 items-center border-t border-[#c6c6c6] bg-[#f4f4f4] text-xs">
      <span className="ml-[11px]">準備完了</span>
      <button type="button" aria-label="マクロの記録" className="ml-5">
        <svg width="14" height="13" viewBox="0 0 14 13" fill="none" stroke="#333">
          <path d="M4 11.500H.5V.5h13V4M.5 3h13M2.500 5.500h2M2.500 8.500h1" />
          <circle cx="9.500" cy="8.500" r="4" />
          <circle cx="9.500" cy="8.500" r="1.500" fill="#333" />
        </svg>
      </button>
      <span className="flex-1" />
      <button type="button" aria-label="標準" className="flex h-[21px] w-10 items-center justify-center bg-[#dcdcdc]">
        <svg width="13" height="13" viewBox="0 0 13 13" fill="none" stroke="#222"><path d="M.5.5h12v12H.5zM.5 4.500h12M.5 8.500h12M4.500.5v12M8.500.5v12" /></svg>
      </button>
      <button type="button" aria-label="ページ レイアウト" className="flex w-10 justify-center">
        <svg width="14" height="13" viewBox="0 0 14 13" fill="none" stroke="#222"><path d="M.5.5h13v12H.5zM3.500 2.500h7v8h-7zM5 4.500h4M5 6.500h4M5 8.500h4" /></svg>
      </button>
      <button type="button" aria-label="改ページ プレビュー" className="flex w-10 justify-center">
        <svg width="14" height="13" viewBox="0 0 14 13" fill="none" stroke="#222"><path d="M.5.5h13v12H.5zM4.500.5v7h-4M9.500.5v7M4.500 7.500h9" /></svg>
      </button>
      <button type="button" aria-label="縮小" className="ml-[6px] flex w-2 justify-center"><span className="h-px w-2 bg-[#333]" /></button>
      <input
        type="range"
        aria-label="ズーム"
        min={0}
        max={200}
        defaultValue={100}
        className="ml-[5px] h-3 w-[100px] appearance-none bg-transparent [&::-webkit-slider-runnable-track]:h-px [&::-webkit-slider-runnable-track]:bg-[#666] [&::-webkit-slider-thumb]:-mt-[5px] [&::-webkit-slider-thumb]:h-[11px] [&::-webkit-slider-thumb]:w-[5px] [&::-webkit-slider-thumb]:appearance-none [&::-webkit-slider-thumb]:bg-[#606060]"
      />
      <button type="button" aria-label="拡大" className="ml-1">
        <svg width="8" height="8" viewBox="0 0 8 8" stroke="#333"><path d="M0 4.500h8M4.500 0v8" /></svg>
      </button>
      <button type="button" className="ml-[13px] mr-[18px] w-9 text-[13px] leading-5">100%</button>
    </footer>
  );
}

export default function App() {
  return (
    <div className="flex h-screen flex-col overflow-hidden border-x border-b border-[#107c41] bg-[#efefef] font-['Noto_Sans','Noto_Sans_CJK_JP',sans-serif] text-[#242424]">
      <TitleBar />
      <TabRow />
      <Ribbon />
      <FormulaBar />
      <main className="flex min-h-0 flex-1">
        <div className="flex min-w-0 flex-1 flex-col">
          <div className="flex min-h-0 flex-1">
            <Sheet />
            <SheetScroll />
          </div>
          <SheetTabs />
        </div>
        <CopilotPane />
      </main>
      <StatusBar />
    </div>
  );
}
